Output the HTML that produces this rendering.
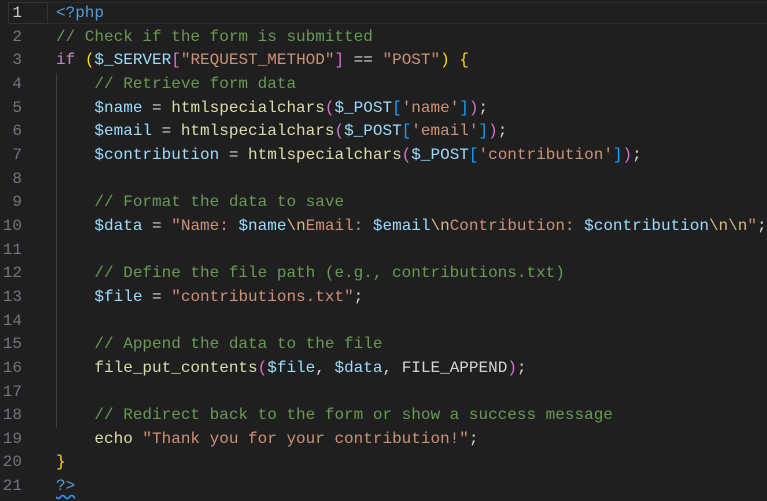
<!DOCTYPE html>
<html><head><meta charset="utf-8"><style>
html,body{margin:0;padding:0;background:#1f1f1f;width:767px;height:501px;overflow:hidden}
.ed{position:relative;top:2px;font-family:"Liberation Mono",monospace;font-size:16px;line-height:23.65px;color:#d4d4d4}
.g{position:absolute;left:0;top:0;width:22px;text-align:right;color:#6e7681}
.g div.a{color:#cccccc}
.c{position:absolute;left:56px;top:0;white-space:pre}
.hl{position:absolute;left:8px;top:0px;width:760px;height:22px;border:1px solid #2b2b2b;box-sizing:border-box}
.gb{position:absolute;left:8px;top:0px;width:40px;height:22px;border:1px solid #333;border-radius:2px;box-sizing:border-box}
.gd{position:absolute;left:56px;top:71px;width:1px;height:355px;background:#404040}
.t{color:#569cd6}.cm{color:#6a9955}.k{color:#c586c0}.v{color:#9cdcfe}.s{color:#ce9178}.e{color:#d7ba7d}.f{color:#dcdcaa}
.b1{color:#ffd700}.b2{color:#da70d6}.b3{color:#179fff}
.sq{text-decoration:underline wavy #3794ff;text-underline-offset:4px}
</style></head><body><div class="ed">
<div class="hl"></div><div class="gb"></div><div class="gd"></div>
<div class="g"><div class="a">1</div><div>2</div><div>3</div><div>4</div><div>5</div><div>6</div><div>7</div><div>8</div><div>9</div><div>10</div><div>11</div><div>12</div><div>13</div><div>14</div><div>15</div><div>16</div><div>17</div><div>18</div><div>19</div><div>20</div><div>21</div></div>
<div class="c"><span class="t">&lt;?php</span>
<span class="cm">// Check if the form is submitted</span>
<span class="k">if</span> <span class="b1">(</span><span class="v">$_SERVER</span><span class="b2">[</span><span class="s">"REQUEST_METHOD"</span><span class="b2">]</span> == <span class="s">"POST"</span><span class="b1">)</span> <span class="b1">{</span>
    <span class="cm">// Retrieve form data</span>
    <span class="v">$name</span> = <span class="f">htmlspecialchars</span><span class="b2">(</span><span class="v">$_POST</span><span class="b3">[</span><span class="s">'name'</span><span class="b3">]</span><span class="b2">)</span>;
    <span class="v">$email</span> = <span class="f">htmlspecialchars</span><span class="b2">(</span><span class="v">$_POST</span><span class="b3">[</span><span class="s">'email'</span><span class="b3">]</span><span class="b2">)</span>;
    <span class="v">$contribution</span> = <span class="f">htmlspecialchars</span><span class="b2">(</span><span class="v">$_POST</span><span class="b3">[</span><span class="s">'contribution'</span><span class="b3">]</span><span class="b2">)</span>;

    <span class="cm">// Format the data to save</span>
    <span class="v">$data</span> = <span class="s">"Name: </span><span class="v">$name</span><span class="e">\n</span><span class="s">Email: </span><span class="v">$email</span><span class="e">\n</span><span class="s">Contribution: </span><span class="v">$contribution</span><span class="e">\n\n</span><span class="s">"</span>;

    <span class="cm">// Define the file path (e.g., contributions.txt)</span>
    <span class="v">$file</span> = <span class="s">"contributions.txt"</span>;

    <span class="cm">// Append the data to the file</span>
    <span class="f">file_put_contents</span><span class="b2">(</span><span class="v">$file</span>, <span class="v">$data</span>, FILE_APPEND<span class="b2">)</span>;

    <span class="cm">// Redirect back to the form or show a success message</span>
    <span class="f">echo</span> <span class="s">"Thank you for your contribution!"</span>;
<span class="b1">}</span>
<span class="t sq">?&gt;</span></div>
</div></body></html>
